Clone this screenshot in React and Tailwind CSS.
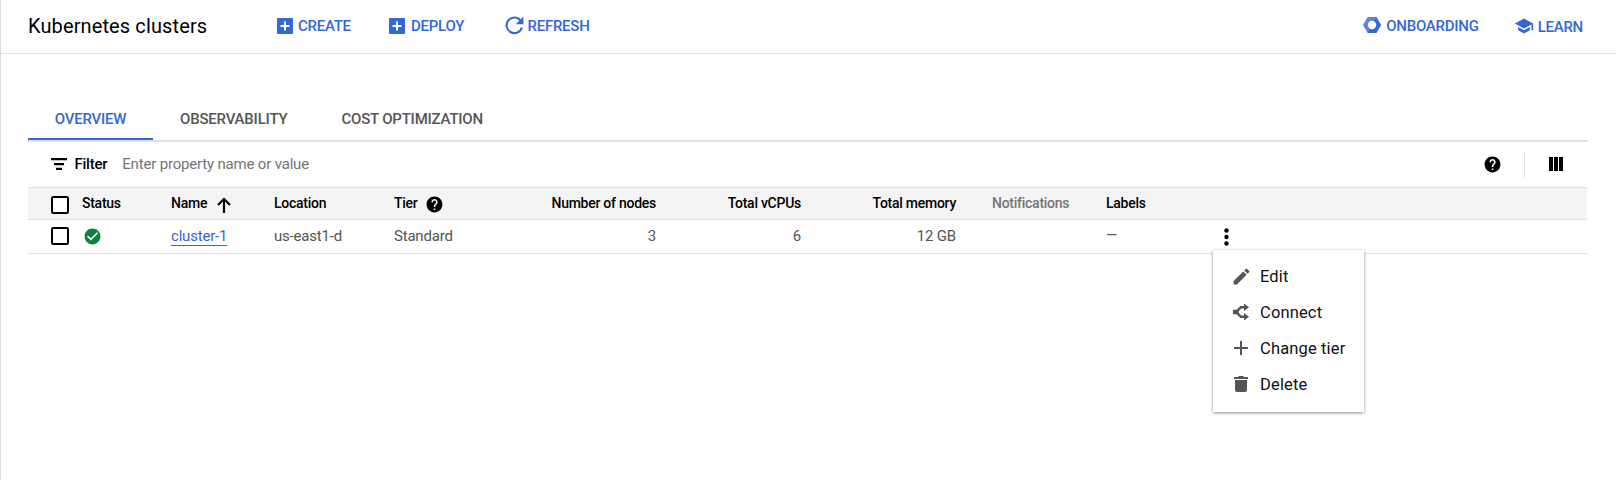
const BLUE = "#3367d6";

function Icon({ d, size = 24, className = "", fill = "currentColor", viewBox = "0 0 24 24" }) {
  return (
    <svg width={size} height={size} viewBox={viewBox} fill={fill} className={`block shrink-0 ${className}`}>
      <path d={d} />
    </svg>
  );
}

const HELP =
  "M12 2C6.48 2 2 6.48 2 12s4.48 10 10 10 10-4.48 10-10S17.52 2 12 2zm1 17h-2v-2h2v2zm2.07-7.75l-.9.92C13.45 12.9 13 13.5 13 15h-2v-.5c0-1.1.45-2.1 1.17-2.83l1.24-1.26c.37-.36.59-.86.59-1.41 0-1.1-.9-2-2-2s-2 .9-2 2H8c0-2.21 1.79-4 4-4s4 1.79 4 4c0 .88-.36 1.68-.93 2.25z";
const SCHOOL = "M5 13.18v4L12 21l7-3.82v-4L12 17l-7-3.82zM12 3L1 9l11 6 9-4.91V17h2V9L12 3z";
const CHECK =
  "M12 2C6.48 2 2 6.48 2 12s4.48 10 10 10 10-4.48 10-10S17.52 2 12 2zm-2 15l-5-5 1.41-1.41L10 14.17l7.59-7.59L19 8l-9 9z";
const PENCIL =
  "M3 17.25V21h3.75L17.81 9.94l-3.75-3.75L3 17.25zM20.71 7.04c.39-.39.39-1.02 0-1.41l-2.34-2.34c-.39-.39-1.02-.39-1.41 0l-1.83 1.83 3.75 3.75 1.83-1.83z";

function AddBox() {
  return (
    <svg width="16" height="16" viewBox="0 0 16 16" className="mb-px block shrink-0">
      <rect width="16" height="16" rx="1" fill={BLUE} />
      <path d="M7 3.500h2V7h3.500v2H9v3.500H7V9H3.500V7H7z" fill="#fff" />
    </svg>
  );
}

function Refresh() {
  return (
    <svg width="19" height="19" viewBox="0 0 19 19" className="mb-px block shrink-0">
      <path d="M15.400 4.300A7.800 7.800 0 1 0 16.900 11.500" fill="none" stroke={BLUE} strokeWidth="2.100" />
      <path d="M18.400 0.600v7.600h-7.600z" fill={BLUE} />
    </svg>
  );
}

function Hexagon() {
  return (
    <svg width="18" height="16" viewBox="0 0 18 16" className="mb-[2px] block shrink-0">
      <path d="M4.700 0h8.600L18 8l-4.700 8H4.700L0 8z" fill="#5c85de" />
      <path d="M13.300 0L18 8l-4.700 8H4.700z" fill={BLUE} />
      <circle cx="9" cy="8" r="4.200" fill="#fff" />
    </svg>
  );
}

function Connect() {
  return (
    <svg width="16" height="18" viewBox="0 0 16 18" className="block shrink-0">
      <path d="M3 9L8 4.200H12M3 9l5 4.800H12" fill="none" stroke="#555" strokeWidth="2.500" />
      <path d="M0 6.700h4.500L6 9l-1.500 2.300H0zM11 0.400l5 3.800-5 3.800zM11 10l5 3.800-5 3.800z" fill="#555" />
    </svg>
  );
}

function Checkbox() {
  return <span className="block size-[18px] rounded-[2px] border-2 border-black bg-white" />;
}

const TAB = "flex h-full items-center text-[15px] font-medium tracking-[-0.2px]";
const COLUMNS =
  "grid grid-cols-[23px_31px_89px_103px_120px_142px_120px_145px_155px_36px_114px_107px_1fr] whitespace-nowrap";

function MenuItem({ icon, label }) {
  return (
    <div className="flex h-9 items-center">
      <span className="flex w-4 justify-center text-[#555]">{icon}</span>
      <span className="ml-[11px] pt-[3px] text-[16.5px] tracking-[0.15px] text-[#111]">{label}</span>
    </div>
  );
}

export default function App() {
  return (
    <div className="h-[480px] w-full overflow-hidden border-l border-[#dadce0] bg-white font-[Roboto,sans-serif] text-black">
      <header className="flex h-[54px] items-center border-b border-[#e0e0e0] pb-px text-[15px] font-medium tracking-[-0.25px] text-[#3367d6]">
        <h1 className="w-[276px] pl-[27px] text-xl font-normal tracking-[0.12px] text-black">Kubernetes clusters</h1>
        <div className="flex w-[112px] items-center gap-[5px]"><AddBox />CREATE</div>
        <div className="flex w-[116px] items-center gap-[6px]"><AddBox />DEPLOY</div>
        <div className="flex items-center gap-[3.500px]"><Refresh />REFRESH</div>
        <div className="ml-auto flex items-center gap-[5px]"><Hexagon />ONBOARDING</div>
        <div className="ml-[35px] mr-[33px] flex items-center gap-[4px] pt-[2px]"><Icon d={SCHOOL} size={20} className="mb-[2px]" />LEARN</div>
      </header>

      <main className="ml-[27px] w-[1560px] pt-[44px]">
        <nav className="flex h-[44px] items-stretch border-b-2 border-[#e0e0e0] text-[#555]">
          <div className={`${TAB} w-[125px] justify-center border-b-2 border-[#3367d6] pt-[2px] text-[#3367d6]`}>OVERVIEW</div>
          <div className={`${TAB} pl-[27px]`}>OBSERVABILITY</div>
          <div className={`${TAB} pl-[54px]`}>COST OPTIMIZATION</div>
        </nav>

        <div className="flex h-[45px] items-center text-[15px] tracking-[-0.18px]">
          <svg width="16" height="12" viewBox="0 0 16 12" className="mb-px ml-[23px] block">
            <path d="M0 0h16v2.300H0zM3 5h10v2.300H3zM5 9.700h6V12H5z" />
          </svg>
          <span className="ml-[7.500px] font-medium tracking-[-0.25px]">Filter</span>
          <span className="ml-[15px] text-[#757575]">Enter property name or value</span>
          <Icon d={HELP} size={19} className="mb-px ml-auto" />
          <span className="ml-[22px] h-[27px] w-px bg-[#e0e0e0]" />
          <svg width="14" height="14" viewBox="0 0 14 14" className="mb-px ml-[24px] mr-[25px] block">
            <path d="M0 0h4v14H0zM5 0h4v14H5zM10 0h4v14h-4z" />
          </svg>
        </div>

        <div className={`${COLUMNS} h-[33px] w-[1559px] items-center border-y border-[#e0e0e0] bg-[#f4f4f4] pb-[2px] text-sm font-medium tracking-[-0.26px]`}>
          <span />
          <div className="pt-[5px]"><Checkbox /></div>
          <span>Status</span>
          <div className="flex items-center gap-[10px]">
            Name
            <svg width="14" height="16" viewBox="0 0 14 16" className="-mb-[4px] block">
              <path d="M7 16V2M1 8l6-6 6 6" fill="none" stroke="#000" strokeWidth="2.200" />
            </svg>
          </div>
          <span>Location</span>
          <div className="flex items-center gap-[7px]">Tier<Icon d={HELP} size={19} className="-mb-[3px]" /></div>
          <span className="text-right">Number of nodes</span>
          <span className="text-right">Total vCPUs</span>
          <span className="text-right">Total memory</span>
          <span />
          <span className="text-[#757575]">Notifications</span>
          <span>Labels</span>
          <span />
        </div>

        <div className={`${COLUMNS} h-[34px] w-[1559px] items-center border-b border-[#e0e0e0] pb-px text-[15px] tracking-[-0.2px] text-[#555]`}>
          <span />
          <Checkbox />
          <Icon d={CHECK} size={19} fill="#0f8043" className="ml-px" />
          <span><span className="border-b border-[#3367d6] text-[#3367d6]">cluster-1</span></span>
          <span>us-east1-d</span>
          <span>Standard</span>
          <span className="text-right">3</span>
          <span className="text-right">6</span>
          <span className="text-right">12 GB</span>
          <span />
          <span />
          <span className="text-[14.5px]">—</span>
          <div className="relative pl-[11px] pt-[2px] text-black">
            <svg width="5" height="18" viewBox="0 0 5 18" className="block">
              <circle cx="2.500" cy="2.500" r="2.200" /><circle cx="2.500" cy="9" r="2.200" /><circle cx="2.500" cy="15.500" r="2.200" />
            </svg>
            <div className="absolute left-0 top-[24px] h-[162px] w-[151px] bg-white pl-5 pt-2 shadow-[0_1px_3px_rgba(0,0,0,0.45)]">
              <MenuItem label="Edit" icon={<Icon d={PENCIL} size={21} />} />
              <MenuItem label="Connect" icon={<Connect />} />
              <MenuItem label="Change tier" icon={<Icon d="M6 0h2v6h6v2H8v6H6V8H0V6h6z" size={14} viewBox="0 0 14 14" />} />
              <MenuItem label="Delete" icon={<Icon d="M1 4h12v10q0 2-2 2H3q-2 0-2-2zM0 1h4l1-1h4l1 1h4v2H0z" size={16} viewBox="-1 0 16 16" />} />
            </div>
          </div>
        </div>
      </main>
    </div>
  );
}
